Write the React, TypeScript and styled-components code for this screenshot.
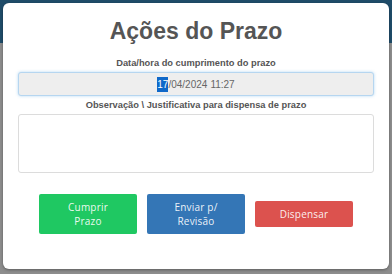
import styled, { createGlobalStyle } from "styled-components"

const Global = createGlobalStyle`
    html, body {
        margin: 0;
        padding: 0;
    }
    body {
        width: 392px;
        height: 274px;
        overflow: hidden;
        font-family: "Liberation Sans", Arial, sans-serif;
        background: linear-gradient(#1f4c69 0 43px, #8d8d8d 43px);
    }
`

const Backdrop = styled.div`
    display: flex;
    width: 392px;
    height: 274px;
    padding: 3px;
    box-sizing: border-box;
`

const Modal = styled.section`
    display: flex;
    flex-direction: column;
    align-items: center;
    width: 386px;
    height: 266px;
    box-sizing: border-box;
    padding: 15px 15px 0;
    background-color: white;
    border-radius: 6px;
    box-shadow: 0 1px 3px rgba(0, 0, 0, 0.35);
`

const Title = styled.h1`
    margin: 0;
    font-size: 23px;
    line-height: 26px;
    font-weight: bold;
    color: #555;
`

const Label = styled.label<{ $top: number }>`
    display: block;
    margin-top: ${(p) => p.$top}px;
    font-size: 9.3px;
    line-height: 12px;
    font-weight: bold;
    color: #555;
    text-align: center;
`

const DateField = styled.div`
    display: flex;
    justify-content: center;
    align-items: center;
    width: 100%;
    height: 24px;
    margin-top: 3px;
    box-sizing: border-box;
    background-color: #eeeeee;
    border: 1px solid #b6d6f0;
    border-radius: 3px;
    box-shadow: 0 0 3px rgba(102, 175, 233, 0.5);
    font-size: 10px;
    color: #666;
`

const Selected = styled.span`
    background-color: #0f68c9;
    color: white;
    padding: 2px 0;
`

const Gap = styled.span`
    display: inline-block;
    width: 3px;
`

const TextArea = styled.textarea`
    display: block;
    width: 100%;
    height: 59px;
    margin-top: 3px;
    box-sizing: border-box;
    border: 1px solid #dcdcdc;
    border-radius: 3px;
    resize: none;
    outline: none;
`

const Actions = styled.div`
    display: flex;
    align-items: center;
    gap: 10px;
    margin-top: 21px;
`

const Button = styled.button<{ $color: string }>`
    width: 98px;
    padding: 6px 0;
    border: none;
    border-radius: 2px;
    background-color: ${(p) => p.$color};
    color: rgba(255, 255, 255, 0.92);
    font-family: "Open Sans", sans-serif;
    font-size: 10px;
    line-height: 14px;
    letter-spacing: 0.2px;
    cursor: pointer;
`

const App = () => {
    return (
        <>
            <Global />
            <Backdrop>
                <Modal>
                    <Title>Ações do Prazo</Title>
                    <Label $top={13}>Data/hora do cumprimento do prazo</Label>
                    <DateField>
                        <Selected>17</Selected>/04/2024<Gap /> 11:27
                    </DateField>
                    <Label $top={3}>Observação \ Justificativa para dispensa de prazo</Label>
                    <TextArea />
                    <Actions>
                        <Button $color="#1fc862">Cumprir<br />Prazo</Button>
                        <Button $color="#3476b6">Enviar p/<br />Revisão</Button>
                        <Button $color="#dc524e">Dispensar</Button>
                    </Actions>
                </Modal>
            </Backdrop>
        </>
    )
}

export default App
